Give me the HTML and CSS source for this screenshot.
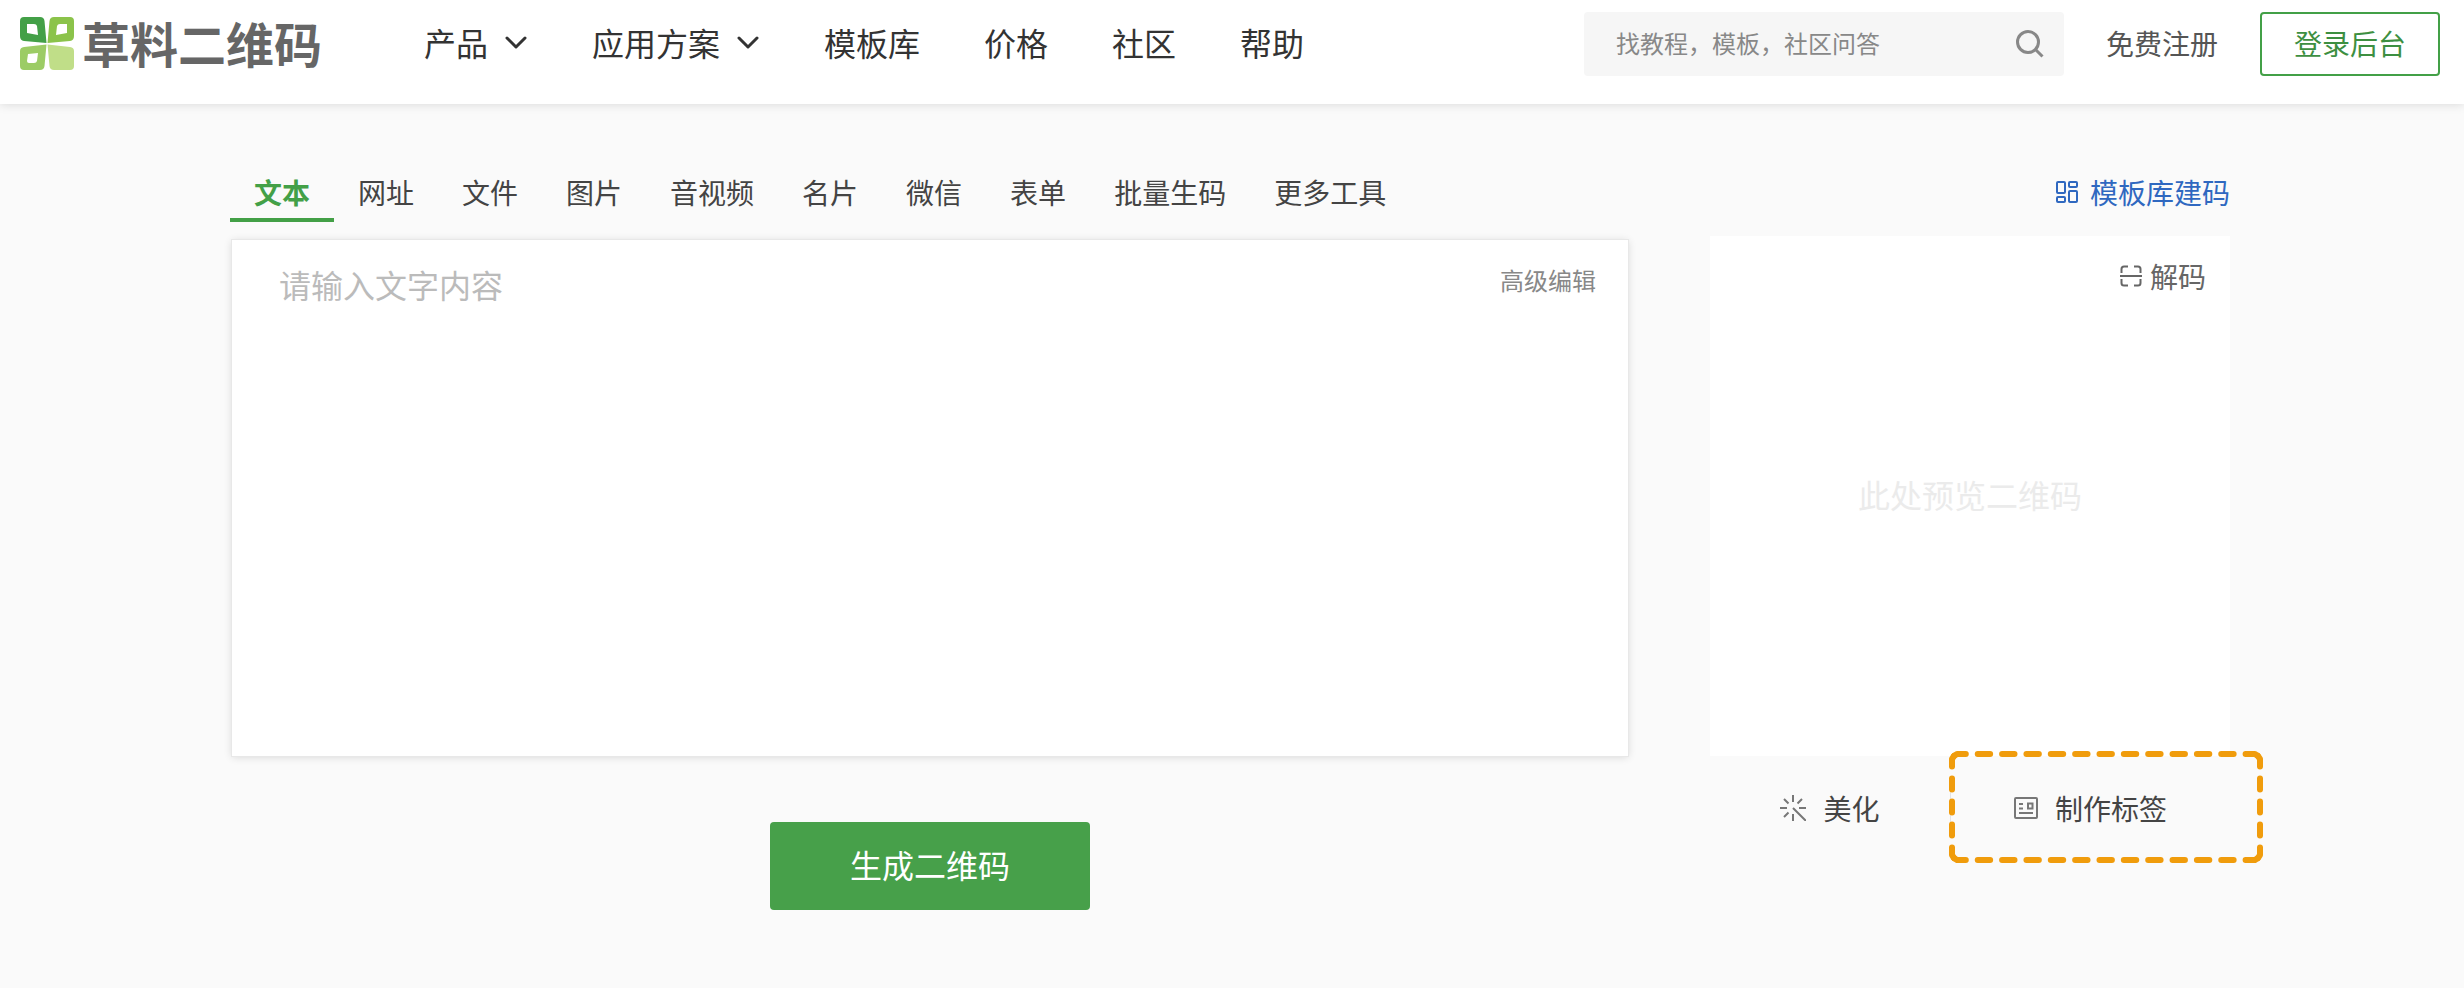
FILE: index.html
```
<!DOCTYPE html>
<html lang="zh-CN">
<head>
    <meta charset="UTF-8">
    <meta name="viewport" content="width=device-width, initial-scale=1.0">
    <title>草料二维码</title>
    <link rel="stylesheet" href="styles.css">
</head>
<body>
    <header class="header">
        <a class="logo" href="#">
            <svg width="54" height="54" viewBox="0 0 54 54">
                <path fill="#43a047" fill-rule="evenodd" d="M4 0H20Q24 0 24.500 4L26.500 26L4 24Q0 23.500 0 19V4Q0 0 4 0ZM7 7V16L18 18L17 9Q16.500 7 14 7Z"/>
                <path fill="#8bc34a" fill-rule="evenodd" d="M34 0H50Q54 0 54 4V19Q54 23.500 50 24L27.500 26L29.500 4Q30 0 34 0ZM37 9L36 18L47 16V7H40Q37.500 7 37 9Z"/>
                <path fill="#9ccc65" fill-rule="evenodd" d="M4 30L26.500 27.500L24.500 49Q24 53 20 53H4Q0 53 0 49V34Q0 30.500 4 30ZM8 37L7 44Q7 46 9 46H14Q16.500 46 17 44L18 36Z"/>
                <path fill="#c0de88" d="M27.500 27.500L50 30Q54 30.500 54 34V49Q54 53 50 53H34Q30 53 29.500 49Z"/>
            </svg>
            <span>草料二维码</span>
        </a>
        <nav class="nav">
            <a href="#">产品
                <svg width="22" height="18" viewBox="0 -4 22 18"><path d="M2 1L11 10L20 1"/></svg>
            </a>
            <a href="#">应用方案
                <svg width="22" height="18" viewBox="0 -4 22 18"><path d="M2 1L11 10L20 1"/></svg>
            </a>
            <a href="#">模板库</a>
            <a href="#">价格</a>
            <a href="#">社区</a>
            <a href="#">帮助</a>
        </nav>
        <form class="search">
            <input type="text" placeholder="找教程，模板，社区问答" aria-label="搜索">
            <button type="button" aria-label="搜索">
                <svg width="28" height="28" viewBox="0 0 28 28"><circle cx="12" cy="12" r="10.500"/><path d="M19.500 19.500L26.500 26.500"/></svg>
            </button>
        </form>
        <a class="register" href="#">免费注册</a>
        <button class="login" type="button">登录后台</button>
    </header>

    <main class="main">
        <section class="editor">
            <nav class="tabs">
                <a class="active" href="#">文本</a>
                <a href="#">网址</a>
                <a href="#">文件</a>
                <a href="#">图片</a>
                <a href="#">音视频</a>
                <a href="#">名片</a>
                <a href="#">微信</a>
                <a href="#">表单</a>
                <a href="#">批量生码</a>
                <a href="#">更多工具</a>
            </nav>
            <div class="panel">
                <textarea placeholder="请输入文字内容" aria-label="文字内容"></textarea>
                <a href="#">高级编辑</a>
            </div>
            <button class="generate" type="button">生成二维码</button>
        </section>

        <aside class="side">
            <a class="template-link" href="#">
                <svg width="22" height="22" viewBox="0 0 22 22"><rect x="1" y="1" width="8" height="11" rx="1"/><rect x="13" y="1" width="8" height="5" rx="1"/><rect x="1" y="16" width="8" height="5" rx="1"/><rect x="13" y="10" width="8" height="11" rx="1"/></svg>
                模板库建码
            </a>
            <div class="preview">
                <a class="decode" href="#">
                    <svg width="22" height="22" viewBox="0 0 22 22"><path d="M1.500 8V4Q1.500 1.500 4 1.500H8M14 1.500H18Q20.500 1.500 20.500 4V8M1.500 14V18Q1.500 20.500 4 20.500H8M14 20.500H18Q20.500 20.500 20.500 18V14M0 11H22"/></svg>
                    解码
                </a>
                <p>此处预览二维码</p>
            </div>
            <div class="actions">
                <a href="#">
                    <svg width="26" height="26" viewBox="0 0 26 26"><path d="M13 0V7M13 19V26M0 13H7M19 13H26M4 4L8.500 8.500M22 4L17.500 8.500M4 22L8.500 17.500M13 13L26 26"/></svg>
                    美化
                </a>
                <a class="label-link" href="#">
                    <svg width="24" height="22" viewBox="0 0 24 22"><rect x="1" y="1" width="22" height="20" rx="1"/><path d="M5 7H9M5 11.500H9M5 16H19M14 6.500H18.500V11.500H14Z"/></svg>
                    制作标签
                    <!-- highlight frame -->
                    <svg class="frame" width="314" height="112" viewBox="0 0 314 112">
                        <path stroke-dasharray="12.4 11.95" d="M5 5L8 3H306L309 5"/>
                        <path stroke-dasharray="12.4 11.95" d="M5 107L8 109H306L309 107"/>
                        <path stroke-dasharray="11.2 11.8" d="M5 5L3 8V104L5 107"/>
                        <path stroke-dasharray="11.2 11.8" d="M309 5L311 8V104L309 107"/>
                    </svg>
                </a>
            </div>
        </aside>
    </main>
</body>
</html>
```
FILE: styles.css
```
* {
    box-sizing: border-box;
}
body {
    margin: 0;
    min-height: 100vh;
    background-color: #fafafa;
    color: #444;
    font-family: "Noto Sans CJK SC", sans-serif;
    font-size: 28px;
    line-height: 40px;
}
a {
    color: inherit;
    text-decoration: none;
}
button, input, textarea {
    font-family: inherit;
    border: none;
    padding: 0;
}
button {
    cursor: pointer;
}
svg {
    flex: none;
    fill: none;
    stroke: currentColor;
    stroke-width: 2;
}

/* header */
.header {
    display: flex;
    align-items: center;
    padding: 12px 24px 28px 20px;
    background-color: #fff;
    box-shadow: 0 0 10px rgba(0, 0, 0, 0.15);
}
.logo {
    display: flex;
    align-items: center;
    gap: 8px;
    height: 64px;
    margin-right: 102px;
    color: #666;
    font-size: 48px;
    font-weight: 700;
    white-space: nowrap;
}
.logo span {
    padding-bottom: 4px;
}
.logo svg {
    stroke: none;
}
.nav {
    display: flex;
    gap: 64px;
    padding-bottom: 4px;
    color: #333;
    font-size: 32px;
    white-space: nowrap;
}
.nav a {
    display: flex;
    align-items: center;
    gap: 17px;
}
.nav a:first-child, .nav a:nth-child(2) {
    padding-right: 1px;
}
.nav svg {
    stroke-width: 3;
    stroke-linecap: round;
    stroke-linejoin: round;
}
.search {
    display: flex;
    align-items: center;
    width: 480px;
    height: 64px;
    margin-left: auto;
    padding: 0 20px 0 32px;
    background-color: #f6f6f6;
    border-radius: 4px;
}
.search input {
    flex: 1;
    min-width: 0;
    padding-bottom: 4px;
    background: none;
    font-size: 24px;
}
.search input::placeholder {
    color: #888;
}
.search button {
    display: flex;
    background: none;
    color: #888;
}
.search svg {
    stroke-width: 3;
}
.register {
    margin: 0 42px;
    padding-bottom: 2px;
    color: #555;
    white-space: nowrap;
}
.login {
    width: 180px;
    height: 64px;
    padding-bottom: 2px;
    border: 2px solid #43a047;
    border-radius: 4px;
    background-color: #fff;
    color: #3d8f41;
    font-size: 28px;
    white-space: nowrap;
}

/* content */
.main {
    display: grid;
    grid-template-columns: 1fr 520px;
    gap: 80px;
    padding: 58px 234px 40px 230px;
}
.tabs {
    display: flex;
    white-space: nowrap;
}
.tabs a {
    height: 60px;
    padding: 10px 24px 0;
}
.tabs .active {
    border-bottom: 4px solid #43a047;
    color: #43a047;
    font-weight: 700;
}
.panel {
    display: flex;
    align-items: flex-start;
    height: 516px;
    margin: 18px 2px 66px;
    padding: 20px 32px 20px 47px;
    background-color: #fff;
    box-shadow: 0 0 0 1px #e8e8e8, 0 1px 8px rgba(0, 0, 0, 0.15);
}
.panel textarea {
    flex: 1;
    height: 100%;
    background: none;
    font-size: 32px;
    line-height: 48px;
    resize: none;
}
.panel textarea::placeholder {
    color: #bbb;
}
.panel a {
    color: #888;
    font-size: 24px;
}
.generate {
    display: block;
    width: 320px;
    height: 88px;
    margin: 0 auto;
    padding-bottom: 4px;
    border-radius: 4px;
    background-color: #47a04a;
    color: #fff;
    font-size: 32px;
}

/* preview column */
.template-link {
    display: flex;
    align-items: center;
    justify-content: flex-end;
    gap: 12px;
    height: 40px;
    margin: 10px 0 24px;
    color: #2f68c0;
}
.preview {
    position: relative;
    display: flex;
    align-items: center;
    justify-content: center;
    height: 520px;
    background-color: #fff;
}
.preview p {
    margin: 0;
    padding-bottom: 4px;
    color: #ebebeb;
    font-size: 32px;
}
.decode {
    position: absolute;
    top: 20px;
    right: 24px;
    display: flex;
    align-items: center;
    gap: 8px;
    color: #666;
}
.actions {
    display: grid;
    grid-template-columns: 240px 280px;
    margin-top: 32px;
}
.actions a {
    display: flex;
    align-items: center;
    justify-content: center;
    gap: 17px;
}
.actions svg {
    color: #777;
}
.actions .label-link {
    position: relative;
    border-left: 1px solid #e4e4e4;
}
.actions .frame {
    position: absolute;
    top: -37px;
    left: -2px;
    color: #f09c0c;
    stroke-width: 6;
    stroke-linecap: round;
    stroke-linejoin: round;
}
```
